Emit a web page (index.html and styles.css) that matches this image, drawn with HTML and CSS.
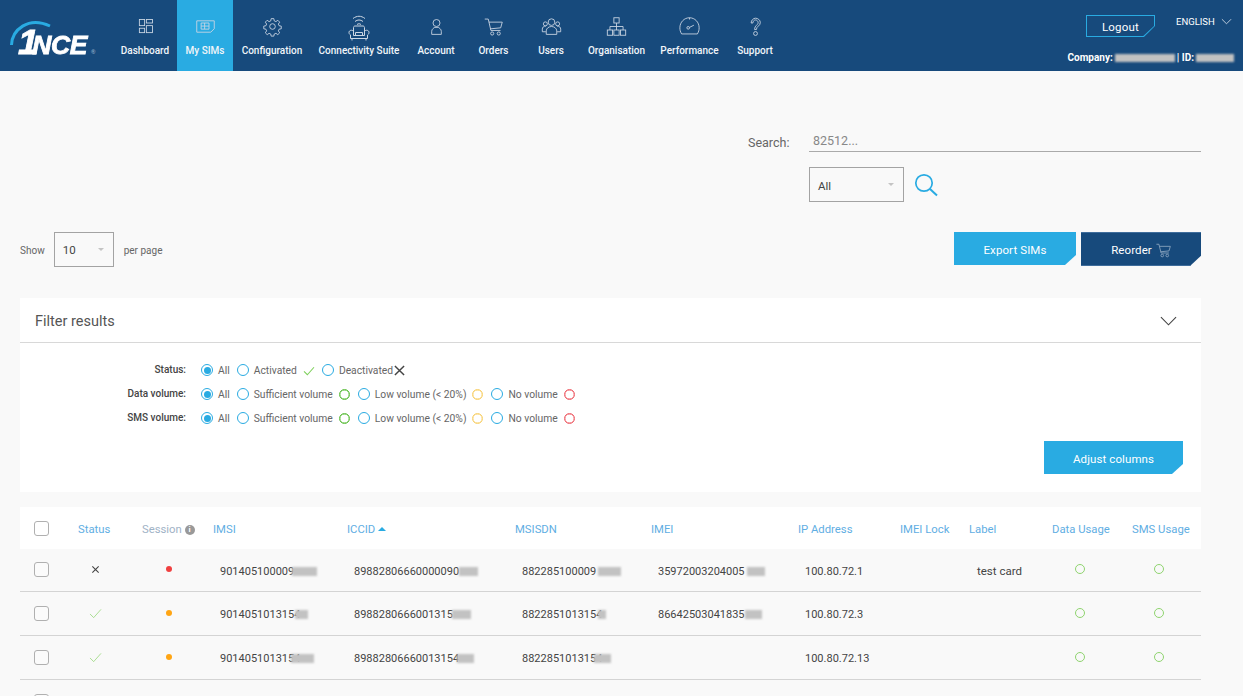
FILE: index.html
```html
<!DOCTYPE html>
<html lang="en">
<head>
<meta charset="utf-8">
<title>My SIMs</title>
<link rel="stylesheet" href="styles.css">
</head>
<body>
<svg class="defs" width="0" height="0" aria-hidden="true">
  <symbol id="cart" viewBox="0 0 18 18"><path d="M.5 1.500h3l2.600 10.500h9.400M4.300 4h12.900l-1.600 5.500-9.900 1" fill="none" stroke="currentColor"/><circle cx="7.500" cy="15" r="1.600" fill="none" stroke="currentColor"/><circle cx="13.500" cy="15" r="1.600" fill="none" stroke="currentColor"/></symbol>
  <symbol id="check" viewBox="0 0 14 12"><path d="M1 6.500l4 4L13 1.500" fill="none" stroke="currentColor"/></symbol>
</svg>
<header class="topbar">
  <a class="logo">
    <svg class="logo-arc" viewBox="0 0 50 40"><path d="M2.500 28C3 13 19 -1 41 9" fill="none" stroke="#29abe2" stroke-width="3"/></svg>
    <span class="logo-text">1NCE</span><span class="logo-r">®</span>
  </a>
  <nav class="nav">
    <a class="nav-item w-dash"><svg class="nav-icon" viewBox="0 0 24 24" fill="none" stroke="currentColor"><rect x="5" y="4" width="6" height="7"/><rect x="13" y="4" width="7" height="4"/><rect x="5" y="14" width="6" height="5"/><rect x="13" y="11" width="7" height="8"/></svg><span>Dashboard</span></a>
    <a class="nav-item w-sims active"><svg class="nav-icon" viewBox="0 0 24 24" fill="none" stroke="currentColor"><path d="M2 5.500h20v9l-4 4H2z"/><path d="M7 8h9v7H7zM11 8v7M11 11.500h5M7 11.500h4"/></svg><span>My SIMs</span></a>
    <a class="nav-item w-conf"><svg class="nav-icon" viewBox="0 0 24 24" fill="none" stroke="currentColor"><circle cx="12" cy="12" r="3.200"/><path d="M10.500 3h3l.5 2.600 1.900.8 2.200-1.500 2.100 2.100-1.500 2.200.8 1.900 2.500.5v3l-2.500.5-.8 1.900 1.500 2.200-2.100 2.100-2.200-1.500-1.900.8-.5 2.400h-3l-.5-2.400-1.900-.8-2.200 1.500-2.100-2.100 1.500-2.200-.8-1.900-2.500-.5v-3l2.500-.5.8-1.900-1.500-2.200 2.100-2.100 2.200 1.500 1.900-.8z"/></svg><span>Configuration</span></a>
    <a class="nav-item w-conn"><svg class="nav-icon nav-icon-tall" viewBox="0 0 24 28" fill="none" stroke="currentColor"><path d="M6 4.500c4-3 8-3 12 0M8 7.500c2.800-2 5.200-2 8 0M10 10.500c1.500-1 2.500-1 4 0"/><path d="M6.500 18v-4.500c0-1 .8-1.500 1.500-1.500h8c.7 0 1.500.5 1.500 1.500V18M8.500 18.500h7v3h-7z"/><path d="M6.500 17.500c-1-2-4.500-1.500-4.500 1 0 1.500 1 2 1.500 2.500v3.500h17V21c.5-.5 1.500-1 1.500-2.500 0-2.500-3.500-3-4.500-1v4h-11zM5 24.500v2M19 24.500v2"/></svg><span>Connectivity Suite</span></a>
    <a class="nav-item w-acc"><svg class="nav-icon" viewBox="0 0 24 24" fill="none" stroke="currentColor"><circle cx="12" cy="8" r="4"/><path d="M6.500 21v-3.500c0-2.500 2.500-4 3.500-4.500h4c1 .5 3.500 2 3.500 4.500V21z"/></svg><span>Account</span></a>
    <a class="nav-item w-ord"><svg class="nav-icon" viewBox="0 0 24 24" fill="none" stroke="currentColor"><path d="M2 3.500h4l3 13h11M6.800 7h15.200l-1.800 6.500-12 1.200"/><circle cx="10.500" cy="20" r="1.800"/><circle cx="18" cy="20" r="1.800"/></svg><span>Orders</span></a>
    <a class="nav-item w-usr"><svg class="nav-icon" viewBox="0 0 24 24" fill="none" stroke="currentColor"><circle cx="12" cy="7" r="3.800"/><circle cx="5" cy="9" r="2.300"/><circle cx="19" cy="9" r="2.300"/><path d="M6 21v-4c0-3 3-5 6-5s6 2 6 5v4zM5.500 18H1.500v-3c0-2 1.500-3.500 4-3.500M18.500 18h4v-3c0-2-1.500-3.500-4-3.500"/></svg><span>Users</span></a>
    <a class="nav-item w-org"><svg class="nav-icon" viewBox="0 0 24 24" fill="none" stroke="currentColor"><rect x="9" y="2" width="6" height="6"/><rect x="1.500" y="16" width="6" height="6"/><rect x="9" y="16" width="6" height="6"/><rect x="16.500" y="16" width="6" height="6"/><path d="M12 8v8M4.500 16v-4h15v4"/></svg><span>Organisation</span></a>
    <a class="nav-item w-perf"><svg class="nav-icon" viewBox="0 0 24 24" fill="none" stroke="currentColor"><path d="M3 20.500h18c1.500-2.500 2-4.500 2-7C23 7 18 2 12 2S1 7 1 13.500c0 2.500.5 4.500 2 7z"/><circle cx="10.500" cy="13.500" r="1.500"/><path d="M12 13l5-2.500M12 2v2"/></svg><span>Performance</span></a>
    <a class="nav-item w-sup"><svg class="nav-icon" viewBox="0 0 24 24" fill="none" stroke="currentColor"><path d="M7 8c0-3 2.500-5.500 5-5.500s5.500 2 5.500 5c0 4-4.500 4-4.500 8h-2c0-5 4-5 4-8 0-1.500-1.500-3-3-3s-3 1.500-3 3.500z"/><circle cx="12" cy="20" r="2.200"/></svg><span>Support</span></a>
  </nav>
  <div class="account">
    <div class="account-top">
      <a class="logout">Logout</a>
      <span class="lang">ENGLISH</span>
      <svg class="lang-chev" viewBox="0 0 12 7"><path d="M1 1l5 5 5-5" fill="none" stroke="currentColor"/></svg>
    </div>
    <div class="company">Company: <i class="blur blur-a"></i> | ID: <i class="blur blur-b"></i></div>
  </div>
</header>
<main class="page">
  <section class="search">
    <div class="search-row">
      <label class="search-label">Search:</label>
      <div class="search-input">82512...</div>
    </div>
    <div class="search-controls">
      <div class="select select-search">All<i class="caret"></i></div>
      <svg class="search-icon" viewBox="0 0 24 24" fill="none" stroke="#29abe2"><circle cx="10" cy="10" r="8.200" stroke-width="1.700"/><path d="M16 16l7 6.500" stroke-width="2"/></svg>
    </div>
  </section>
  <section class="toolbar">
    <div class="perpage">
      <span>Show</span>
      <div class="select select-page">10<i class="caret"></i></div>
      <span>per page</span>
    </div>
    <div class="actions">
      <a class="btn btn-sky btn-export">Export SIMs</a>
      <a class="btn btn-navy btn-reorder">Reorder <svg class="btn-cart"><use href="#cart"/></svg></a>
    </div>
  </section>
  <section class="filter">
    <div class="filter-head">
      <h2>Filter results</h2>
      <svg class="filter-chev" viewBox="0 0 18 10"><path d="M1 1l8 8 8-8" fill="none" stroke="#444" stroke-width="1.200"/></svg>
    </div>
    <div class="filter-body">
      <div class="filter-row">
        <span class="filter-label">Status:</span>
        <span class="radio on"></span><span class="opt">All</span>
        <span class="radio"></span><span class="opt">Activated</span><svg class="ico-check"><use href="#check"/></svg>
        <span class="radio"></span><span class="opt">Deactivated</span><svg class="ico-x" viewBox="0 0 12 12"><path d="M1 1l10 10M11 1L1 11" stroke="#444" stroke-width="1.600"/></svg>
      </div>
      <div class="filter-row">
        <span class="filter-label">Data volume:</span>
        <span class="radio on"></span><span class="opt">All</span>
        <span class="radio"></span><span class="opt">Sufficient volume</span><span class="ring green"></span>
        <span class="radio"></span><span class="opt">Low volume (&lt; 20%)</span><span class="ring yellow"></span>
        <span class="radio"></span><span class="opt">No volume</span><span class="ring red"></span>
      </div>
      <div class="filter-row">
        <span class="filter-label">SMS volume:</span>
        <span class="radio on"></span><span class="opt">All</span>
        <span class="radio"></span><span class="opt">Sufficient volume</span><span class="ring green"></span>
        <span class="radio"></span><span class="opt">Low volume (&lt; 20%)</span><span class="ring yellow"></span>
        <span class="radio"></span><span class="opt">No volume</span><span class="ring red"></span>
      </div>
      <div class="filter-foot"><a class="btn btn-sky btn-adjust">Adjust columns</a></div>
    </div>
  </section>
  <table class="sims">
    <colgroup>
      <col class="c-check"><col class="c-status"><col class="c-session"><col class="c-imsi"><col class="c-iccid"><col class="c-msisdn"><col class="c-imei"><col class="c-ip"><col class="c-lock"><col class="c-label"><col class="c-data"><col class="c-sms">
    </colgroup>
    <thead>
      <tr>
        <th><span class="box"></span></th>
        <th>Status</th>
        <th class="th-muted">Session <i class="info">i</i></th>
        <th>IMSI</th>
        <th>ICCID <i class="sort"></i></th>
        <th>MSISDN</th>
        <th>IMEI</th>
        <th>IP Address</th>
        <th>IMEI Lock</th>
        <th>Label</th>
        <th>Data Usage</th>
        <th>SMS Usage</th>
      </tr>
    </thead>
    <tbody>
      <tr>
        <td class="td-check"><span class="box"></span></td>
        <td class="td-status"><svg class="ico-xs" viewBox="0 0 10 10"><path d="M1.500 1.500l7 7M8.500 1.500l-7 7" stroke="#444" stroke-width="1.200"/></svg></td>
        <td class="td-session"><i class="dot dot-red"></i></td>
        <td>901405100009<i class="blur r-imsi1"></i></td>
        <td>89882806660000090<i class="blur r-iccid1"></i></td>
        <td>882285100009<i class="blur r-msi1"></i></td>
        <td>35972003204005<i class="blur r-imei1"></i></td>
        <td>100.80.72.1</td>
        <td></td>
        <td class="td-label">test card</td>
        <td class="td-data"><i class="o"></i></td>
        <td class="td-sms"><i class="o"></i></td>
      </tr>
      <tr>
        <td class="td-check"><span class="box"></span></td>
        <td class="td-status"><svg class="ico-ok"><use href="#check"/></svg></td>
        <td class="td-session"><i class="dot dot-orange"></i></td>
        <td>9014051013154<i class="blur r-imsi2"></i></td>
        <td>8988280666001315<i class="blur r-iccid2"></i></td>
        <td>8822851013154<i class="blur r-msi2"></i></td>
        <td>86642503041835<i class="blur r-imei2"></i></td>
        <td>100.80.72.3</td>
        <td></td>
        <td></td>
        <td class="td-data"><i class="o"></i></td>
        <td class="td-sms"><i class="o"></i></td>
      </tr>
      <tr>
        <td class="td-check"><span class="box"></span></td>
        <td class="td-status"><svg class="ico-ok"><use href="#check"/></svg></td>
        <td class="td-session"><i class="dot dot-orange"></i></td>
        <td>9014051013154<i class="blur r-imsi3"></i></td>
        <td>89882806660013154<i class="blur r-iccid3"></i></td>
        <td>8822851013154<i class="blur r-msi3"></i></td>
        <td></td>
        <td>100.80.72.13</td>
        <td></td>
        <td></td>
        <td class="td-data"><i class="o"></i></td>
        <td class="td-sms"><i class="o"></i></td>
      </tr>
      <tr>
        <td class="td-check"><span class="box"></span></td>
        <td></td><td></td><td></td><td></td><td></td><td></td><td></td><td></td><td></td><td></td><td></td>
      </tr>
    </tbody>
  </table>
</main>
</body>
</html>
```
FILE: styles.css
```css
* { box-sizing: border-box; }
html, body { margin: 0; height: 696px; overflow: hidden; }
body { background: #f9f9f9; color: #444; font-family: Roboto, "Liberation Sans", sans-serif; font-size: 12px; }
.defs { position: absolute; }
a { color: inherit; text-decoration: none; }
i { font-style: normal; }

.topbar { height: 71px; background: #174a7c; color: #fff; display: flex; }
.logo { position: relative; width: 113px; flex: none; font-family: "Liberation Sans", sans-serif; font-weight: 700; font-style: italic; }
.logo-arc { position: absolute; left: 9px; top: 17px; width: 50px; height: 40px; }
.logo-text { position: absolute; left: 18px; top: 26px; font-size: 25px; line-height: 32px; letter-spacing: -.4px; -webkit-text-stroke: .8px #fff; transform: scaleX(1.06); transform-origin: left center; white-space: nowrap; }
.logo-text::first-letter { font-size: 35px; letter-spacing: -6px; }
.logo-r { position: absolute; left: 91px; top: 49px; font-size: 6px; line-height: 6px; color: #8fa9c4; font-style: normal; }

.nav { display: flex; }
.nav-item { position: relative; display: flex; flex-direction: column; align-items: center; height: 71px; padding-top: 16px; font-size: 10px; font-weight: 500; white-space: nowrap; color: #f1f5f9; }
.nav-item span { position: absolute; top: 45px; }
.nav-item.active { background: #29abe2; }
.nav-icon { width: 21px; height: 21px; color: #cbd6e3; stroke-width: 1; }
.nav-icon-tall { width: 24px; height: 28px; margin-top: -2px; }
.w-dash { width: 64px; } .w-sims { width: 56px; } .w-conf { width: 78px; } .w-conn { width: 96px; } .w-acc { width: 58px; }
.w-ord { width: 57px; } .w-usr { width: 58px; } .w-org { width: 73px; } .w-perf { width: 73px; } .w-sup { width: 58px; }

.account { margin-left: auto; width: 176px; flex: none; padding-right: 9px; display: flex; flex-direction: column; }
.account-top { display: flex; align-items: flex-start; padding: 15px 0 0 19px; }
.logout { position: relative; isolation: isolate; width: 69px; height: 22px; background: #29abe2; clip-path: polygon(0 0, 100% 0, 100% 50%, 84% 100%, 0 100%); display: flex; align-items: center; justify-content: center; font-size: 11.500px; letter-spacing: .2px; padding-top: 2px; }
.logout::before { content: ""; position: absolute; inset: 1px; background: #174a7c; clip-path: polygon(0 0, 100% 0, 100% 50%, 84% 100%, 0 100%); z-index: -1; }
.lang { font-size: 9.500px; margin: 1px 0 0 21px; }
.lang-chev { width: 11px; height: 7px; margin: 3px 0 0 6px; color: #cbd6e3; }
.company { margin-top: 15px; align-self: flex-end; font-size: 10px; font-weight: 700; white-space: nowrap; display: flex; align-items: center; gap: 2px; }
.blur { display: inline-block; height: 8px; background: #c2c2c2; filter: blur(1.200px); vertical-align: middle; }
.blur-a { width: 60px; }
.blur-b { width: 38px; }

.page { padding: 0 42px 0 20px; }
.search { height: 161px; padding-top: 61px; display: flex; flex-direction: column; align-items: flex-end; }
.search-row { display: flex; align-items: flex-start; }
.search-label { width: 61px; padding-top: 3px; font-size: 12.500px; color: #666; }
.search-input { width: 392px; height: 20px; padding: 1px 0 0 4px; border-bottom: 1px solid #aaa; font-size: 12.500px; color: #888; }
.search-controls { display: flex; align-items: center; width: 392px; margin-top: 15px; }
.select { position: relative; height: 35px; border: 1px solid #a3a3a3; display: flex; align-items: center; color: #444; font-size: 11.500px; padding: 3px 0 0 8px; }
.caret { position: absolute; right: 9px; top: 15px; border: 3px solid transparent; border-top: 3px solid #c4c4c4; border-bottom: 0; }
.select-search { width: 95px; }
.search-icon { width: 24px; height: 24px; margin-left: 10px; }

.toolbar { display: flex; justify-content: space-between; height: 66px; }
.perpage { display: flex; align-items: flex-start; height: 35px; font-size: 10px; color: #666; line-height: 38px; }
.select-page { width: 60px; margin: 0 10px 0 9px; padding-top: 0; }
.actions { display: flex; gap: 5px; }
.btn { display: flex; align-items: center; justify-content: center; height: 33px; padding-top: 2px; color: #fff; font-size: 11.500px; font-weight: 400; letter-spacing: .1px; clip-path: polygon(0 0, 100% 0, 100% 70%, calc(100% - 11px) 100%, 0 100%); }
.btn-sky { background: #29abe2; }
.btn-navy { background: #174a7c; border-top: 1px solid #3f6d9c; border-bottom: 1px solid #3f6d9c; }
.btn-export { width: 122px; }
.btn-reorder { width: 120px; height: 34px; }
.btn-cart { width: 15px; height: 15px; margin-left: 4px; color: #90a9c3; }

.filter { background: #fff; height: 194px; }
.filter-head { height: 45px; padding: 2px 24px 0 15px; border-bottom: 1px solid #d8d8d8; display: flex; align-items: center; justify-content: space-between; }
.filter-head h2 { margin: 0; font-size: 14.500px; font-weight: 400; color: #555; }
.filter-chev { width: 17px; height: 10px; }
.filter-body { padding-top: 15px; }
.filter-row { display: flex; align-items: center; height: 24px; font-size: 10.300px; color: #666; }
.filter-label { width: 166px; flex: none; text-align: right; margin-right: 15px; font-size: 10px; font-weight: 500; color: #444; position: relative; top: -1px; }
.radio { width: 12px; height: 12px; border: 1px solid #29abe2; border-radius: 50%; flex: none; margin-right: 5px; position: relative; }
.radio.on::after { content: ""; position: absolute; inset: 1.500px; background: #29abe2; border-radius: 50%; }
.opt { margin-right: 7px; white-space: nowrap; }
.ico-check { width: 12px; height: 10px; flex: none; margin: 2px 7px 0 -1px; color: #7fd05c; stroke-width: 1.300; }
.ico-x { width: 11px; height: 11px; margin-left: -6px; }
.ring { width: 11px; height: 11px; border: 1px solid; border-radius: 50%; margin: 1px 8px 0 -1px; flex: none; box-shadow: inset 0 0 0 .4px currentColor; }
.green { border-color: #5cbd3c; color: #5cbd3c; } .yellow { border-color: #f8d069; color: #f8d069; } .red { border-color: #ee5f68; color: #ee5f68; }
.filter-foot { display: flex; justify-content: flex-end; padding: 11px 18px 0 0; }
.btn-adjust { width: 139px; }

.sims { width: 1181px; margin-top: 15px; border-collapse: collapse; table-layout: fixed; }
.c-check { width: 51px; } .c-status { width: 64px; } .c-session { width: 71px; } .c-imsi { width: 134px; }
.c-iccid { width: 168px; } .c-msisdn { width: 136px; } .c-imei { width: 147px; } .c-ip { width: 102px; }
.c-lock { width: 69px; } .c-label { width: 83px; } .c-data { width: 80px; } .c-sms { width: 76px; }
.sims thead tr { background: #fff; height: 42px; }
.sims th { text-align: left; font-size: 11.300px; font-weight: 400; color: #5faee3; padding: 2px 0 0 7px; white-space: nowrap; }
.sims th:first-child { padding: 0 0 0 14px; }
.sims .th-muted { color: #9fb2c6; }
.sims tbody tr { height: 44px; border-bottom: 1px solid #d4d4d4; }
.sims tbody tr:first-child { height: 42px; }
.sims td { padding: 3px 0 0 14px; white-space: nowrap; color: #444; font-size: 11px; }
.sims td:first-child { padding: 0 0 0 14px; }
.box { display: block; width: 15px; height: 15px; border: 1px solid #b0b0b0; border-radius: 3px; background: #fff; }
td .box { background: #fbfbfb; }
.info { display: inline-block; width: 10px; height: 10px; border-radius: 50%; background: #999; color: #fff; font-size: 8px; line-height: 10px; text-align: center; font-weight: 700; vertical-align: 1px; }
.sort { display: inline-block; border: 4px solid transparent; border-bottom: 4px solid #29abe2; border-top: 0; vertical-align: 2px; }
.sims td.td-status { padding-left: 18px; }
.sims td.td-session { padding-left: 31px; }
.sims td.td-data { padding-left: 30px; }
.sims td.td-sms { padding-left: 29px; }
.sims td.td-label { padding-left: 15px; font-size: 11.500px; }
.ico-xs { width: 9px; height: 9px; display: block; margin: -3px 0 0 2px; }
.ico-ok { width: 13px; height: 11px; display: block; margin-top: -3px; color: #8fd46f; stroke-width: .8; }
.dot { display: block; width: 6px; height: 6px; border-radius: 50%; margin-top: -4px; }
.dot-red { background: #f04040; }
.dot-orange { background: #ffa514; }
.o { display: block; width: 10px; height: 10px; border: 1px solid #8fd46f; border-radius: 50%; margin-top: -4px; }
.sims .blur { height: 9px; vertical-align: -1px; }
.r-imsi1 { width: 25px; margin-left: -2px; }
.r-imsi2 { width: 13px; margin-left: -5px; }
.r-imsi3 { width: 23px; margin-left: -9px; }
.r-iccid1 { width: 19px; }
.r-iccid2 { width: 19px; margin-left: -1px; }
.r-iccid3 { width: 17px; margin-left: -2px; }
.r-msi1 { width: 23px; margin-left: 2px; }
.r-msi2 { width: 8px; margin-left: -4px; }
.r-msi3 { width: 17px; margin-left: -8px; }
.r-imei1 { width: 18px; margin-left: 2px; }
.r-imei2 { width: 17px; }
```
